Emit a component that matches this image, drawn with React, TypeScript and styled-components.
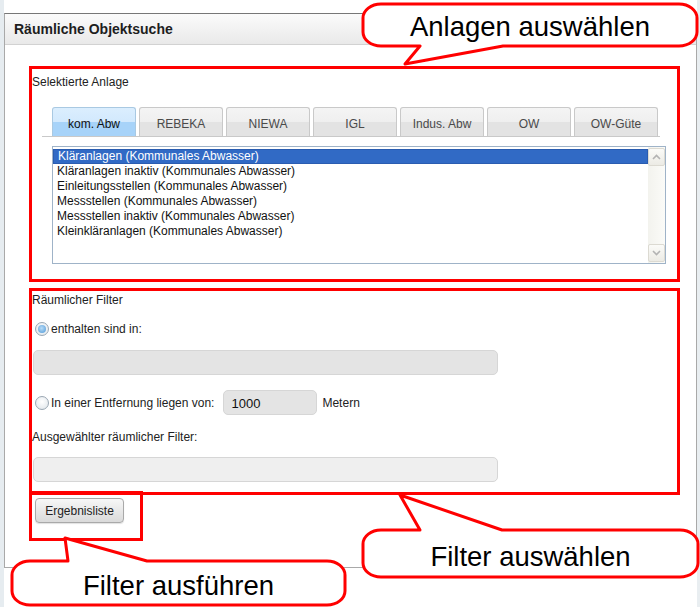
import React from 'react'
import styled, { createGlobalStyle } from 'styled-components'

const GlobalStyle = createGlobalStyle`
  html, body {
    margin: 0;
    padding: 0;
    background: #fff;
  }
  * {
    box-sizing: border-box;
  }
  body {
    font-family: 'Liberation Sans', Arial, sans-serif;
    font-size: 12px;
    color: #222;
  }
`

const Backdrop = styled.div`
  position: relative;
  width: 700px;
  height: 607px;
  overflow: hidden;
  padding: 13px 3px 0 4px;
  background: linear-gradient(to right, #e6ecf0 0, #e6ecf0 4px, #fff 4px, #fff 697px, #e9eef1 697px);
`

const Dialog = styled.div`
  width: 693px;
  height: 555px;
  background: #fff;
  border: 1px solid #a9a9a9;
  border-top-color: #777;
`

const TitleBar = styled.div`
  height: 31px;
  display: flex;
  align-items: center;
  padding-left: 9px;
  font-size: 14px;
  font-weight: bold;
  color: #1e1e1e;
  background: linear-gradient(#fbfbfb, #e9e9e9);
  border-bottom: 1px solid #d2d2d2;
`

const Content = styled.div`
  padding: 21px 16px 0 24px;
`

const Frame = styled.div<{ $w: number; $h: number; $mt?: number }>`
  width: ${(p) => p.$w}px;
  height: ${(p) => p.$h}px;
  margin-top: ${(p) => p.$mt ?? 0}px;
  border: 3px solid #ff0000;
  display: flex;
  flex-direction: column;
  align-items: flex-start;
`

const Heading = styled.div<{ $mt: number }>`
  margin-top: ${(p) => p.$mt}px;
  line-height: 14px;
  color: #222;
`

const TabStrip = styled.div`
  margin: 18px 0 0 10px;
  width: 618px;
  padding-left: 10px;
  display: flex;
  gap: 3px;
  border-bottom: 1px solid #c9c9c9;
`

const Tab = styled.div<{ $active?: boolean }>`
  width: 84px;
  height: 29px;
  display: flex;
  align-items: center;
  justify-content: center;
  padding-top: 4px;
  color: ${(p) => (p.$active ? '#111' : '#4a4a4a')};
  border: 1px solid ${(p) => (p.$active ? '#a9c9e2' : '#c9c9c9')};
  border-bottom: none;
  border-radius: 3px 3px 0 0;
  background: ${(p) =>
    p.$active
      ? 'linear-gradient(#dbeefe 0, #d2e9fd 50%, #a7d3f9 50%, #a7d3f9 100%)'
      : 'linear-gradient(#f4f4f4 0, #efefef 50%, #e3e3e3 50%, #e3e3e3 100%)'};
`

const ListBox = styled.div`
  margin: 9px 0 0 20px;
  width: 614px;
  height: 118px;
  border: 1px solid #9fb3c8;
  display: flex;
  background: #fff;
`

const ListItems = styled.div`
  flex: 1;
  padding-top: 1px;
`

const ListItem = styled.div<{ $selected?: boolean }>`
  height: 15px;
  padding-left: 4px;
  margin-top: ${(p) => (p.$selected ? 1 : 0)}px;
  color: ${(p) => (p.$selected ? '#fff' : '#111')};
  background: ${(p) => (p.$selected ? '#316ac5' : 'transparent')};
  border: ${(p) => (p.$selected ? '1px solid #2a5cb0' : 'none')};
  line-height: ${(p) => (p.$selected ? 13 : 15)}px;
`

const ScrollBar = styled.div`
  width: 17px;
  display: flex;
  flex-direction: column;
  justify-content: space-between;
  background: linear-gradient(to right, #f3f3ee, #fbfbf8);
  padding: 1px 0;
`

const ScrollButton = styled.div`
  height: 18px;
  border: 1px solid #dcdad2;
  border-radius: 2px;
  background: linear-gradient(#fbfbf8, #ecebe5);
  display: flex;
  align-items: center;
  justify-content: center;
`

const RadioRow = styled.div<{ $mt: number }>`
  margin: ${(p) => p.$mt}px 0 0 3px;
  display: flex;
  align-items: center;
  gap: 2px;
`

const Radio = styled.span<{ $checked?: boolean }>`
  width: 14px;
  height: 14px;
  border-radius: 50%;
  border: 1px solid #9aa7b3;
  background: radial-gradient(circle at 50% 40%, #ffffff, #dde3e8);
  display: inline-flex;
  align-items: center;
  justify-content: center;
  &::after {
    content: '';
    width: 8px;
    height: 8px;
    border-radius: 50%;
    display: ${(p) => (p.$checked ? 'block' : 'none')};
    background: radial-gradient(circle at 45% 40%, #b9dcf7, #4d97d6);
  }
`

const RadioLabel = styled.span`
  line-height: 14px;
`

const Field = styled.div<{ $w: number; $mt?: number; $ml?: number; $bg: string }>`
  width: ${(p) => p.$w}px;
  height: 25px;
  margin-top: ${(p) => p.$mt ?? 0}px;
  margin-left: ${(p) => p.$ml ?? 0}px;
  border: 1px solid #d6d6d6;
  border-radius: 5px;
  background: ${(p) => p.$bg};
  display: flex;
  align-items: center;
  padding: 2px 0 0 7px;
  font-size: 13px;
  color: #111;
`

const Unit = styled.span`
  margin-left: 3px;
`

const Button = styled.button`
  margin: 4px 0 0 3px;
  width: 89px;
  height: 25px;
  font-family: 'Liberation Sans', Arial, sans-serif;
  font-size: 12px;
  color: #222;
  border: 1px solid #a9a9a9;
  border-radius: 4px;
  background: linear-gradient(#f7f7f7, #dadada);
  box-shadow: 0 1px 1px rgba(0, 0, 0, 0.12);
  padding: 0;
`

const Overlay = styled.div`
  position: absolute;
  inset: 0;
  pointer-events: none;
`

const CalloutLabel = styled.div<{ $x: number; $y: number; $w: number; $h: number }>`
  position: absolute;
  left: ${(p) => p.$x}px;
  top: ${(p) => p.$y}px;
  width: ${(p) => p.$w}px;
  height: ${(p) => p.$h}px;
  line-height: ${(p) => p.$h}px;
  text-align: center;
  font-size: 27.5px;
  color: #000;
  white-space: nowrap;
`

type Box = { x0: number; y0: number; x1: number; y1: number }
type Tail = { side: 'top' | 'bottom'; a: number; b: number; ax: number; ay: number }

const calloutPath = ({ x0, y0, x1, y1 }: Box, t: Tail) => {
  const r = 18
  const ry = 14
  let d = `M ${x0 + r} ${y0}`
  if (t.side === 'top') d += ` L ${t.a} ${y0} L ${t.ax} ${t.ay} L ${t.b} ${y0}`
  d += ` L ${x1 - r} ${y0} A ${r} ${ry} 0 0 1 ${x1} ${y0 + ry} L ${x1} ${y1 - ry} A ${r} ${ry} 0 0 1 ${x1 - r} ${y1}`
  if (t.side === 'bottom') d += ` L ${t.b} ${y1} L ${t.ax} ${t.ay} L ${t.a} ${y1}`
  d += ` L ${x0 + r} ${y1} A ${r} ${ry} 0 0 1 ${x0} ${y1 - ry} L ${x0} ${y0 + ry} A ${r} ${ry} 0 0 1 ${x0 + r} ${y0} Z`
  return d
}

const callouts = [
  {
    text: 'Anlagen auswählen',
    box: { x0: 363, y0: 4, x1: 697, y1: 46 },
    tail: { side: 'bottom', a: 420, b: 503, ax: 405, ay: 64 } as Tail,
    label: { y: 4, h: 45 },
  },
  {
    text: 'Filter auswählen',
    box: { x0: 363, y0: 530, x1: 698, y1: 577 },
    tail: { side: 'top', a: 420, b: 502, ax: 400, ay: 495 } as Tail,
    label: { y: 533, h: 47 },
  },
  {
    text: 'Filter ausführen',
    box: { x0: 12, y0: 561, x1: 345, y1: 605 },
    tail: { side: 'top', a: 68, b: 147, ax: 65, ay: 538 } as Tail,
    label: { y: 562, h: 47 },
  },
]

const tabs = ['kom. Abw', 'REBEKA', 'NIEWA', 'IGL', 'Indus. Abw', 'OW', 'OW-Güte']

const layers = [
  'Kläranlagen (Kommunales Abwasser)',
  'Kläranlagen inaktiv (Kommunales Abwasser)',
  'Einleitungsstellen (Kommunales Abwasser)',
  'Messstellen (Kommunales Abwasser)',
  'Messstellen inaktiv (Kommunales Abwasser)',
  'Kleinkläranlagen (Kommunales Abwasser)',
]

const Chevron = ({ up }: { up?: boolean }) => (
  <svg width="9" height="6" viewBox="0 0 9 6">
    <path d={up ? 'M1 5 L4.5 1.5 L8 5' : 'M1 1 L4.5 4.5 L8 1'} fill="none" stroke="#b3b3b3" strokeWidth="1.6" />
  </svg>
)

export default function App() {
  return (
    <>
      <GlobalStyle />
      <Backdrop>
        <Dialog>
          <TitleBar>Räumliche Objektsuche</TitleBar>
          <Content>
            <Frame $w={651} $h={216}>
              <Heading $mt={6}>Selektierte Anlage</Heading>
              <TabStrip>
                {tabs.map((t, i) => (
                  <Tab key={t} $active={i === 0}>
                    {t}
                  </Tab>
                ))}
              </TabStrip>
              <ListBox>
                <ListItems>
                  {layers.map((l, i) => (
                    <ListItem key={l} $selected={i === 0}>
                      {l}
                    </ListItem>
                  ))}
                </ListItems>
                <ScrollBar>
                  <ScrollButton>
                    <Chevron up />
                  </ScrollButton>
                  <ScrollButton>
                    <Chevron />
                  </ScrollButton>
                </ScrollBar>
              </ListBox>
            </Frame>

            <Frame $w={651} $h={207} $mt={6}>
              <Heading $mt={2}>Räumlicher Filter</Heading>
              <RadioRow $mt={15}>
                <Radio $checked />
                <RadioLabel>enthalten sind in:</RadioLabel>
              </RadioRow>
              <Field $w={465} $mt={14} $ml={1} $bg="#e4e4e4" />
              <RadioRow $mt={15}>
                <Radio />
                <RadioLabel>In einer Entfernung liegen von:</RadioLabel>
                <Field $w={94} $ml={7} $bg="#e4e4e4">
                  1000
                </Field>
                <Unit>Metern</Unit>
              </RadioRow>
              <Heading $mt={15}>Ausgewählter räumlicher Filter:</Heading>
              <Field $w={465} $mt={13} $ml={1} $bg="#efefef" />
            </Frame>

            <Frame $w={114} $h={50} $mt={-4}>
              <Button>Ergebnisliste</Button>
            </Frame>
          </Content>
        </Dialog>

        <Overlay>
          <svg width="700" height="607" viewBox="0 0 700 607">
            {callouts.map((c) => (
              <path key={c.text} d={calloutPath(c.box, c.tail)} fill="#fff" stroke="#ff0000" strokeWidth="3" strokeLinejoin="round" />
            ))}
          </svg>
          {callouts.map((c) => (
            <CalloutLabel key={c.text} $x={c.box.x0} $y={c.label.y} $w={c.box.x1 - c.box.x0} $h={c.label.h}>
              {c.text}
            </CalloutLabel>
          ))}
        </Overlay>
      </Backdrop>
    </>
  )
}
